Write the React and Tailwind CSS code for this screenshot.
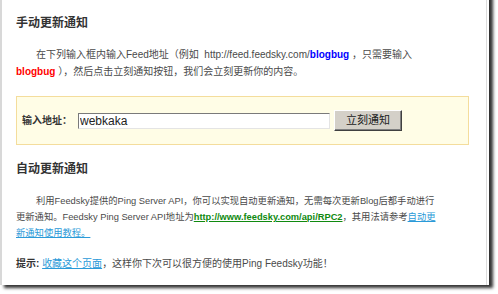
import React from 'react';

const FONT = { fontFamily: '"Liberation Sans", "Noto Sans CJK SC", sans-serif' };

export default function App() {
  return (
    <div className="w-[498px] h-[294px] bg-white overflow-hidden" style={FONT}>
      <div className="w-[489px] h-[295px] -mt-[10px] border-l-2 border-[#d8d8d8] bg-white shadow-[4px_3px_3px_rgba(0,0,0,0.8)]">
        <div className="h-full w-[485px] border-r border-[#dcdcdc] pt-[10px] pl-[14px] text-[#4a4a4a]">
          {/* Manual notify */}
          <h3 className="pt-[15px] text-[12px] font-bold leading-[16px] text-[#333]">手动更新通知</h3>

          <div className="mt-[15px] text-[10px] leading-[17px] whitespace-nowrap">
            <div className="pl-[20px]">
              在下列输入框内输入Feed地址（例如 &nbsp;http://feed.feedsky.com/<b className="text-[#0000ff]">blogbug</b> ，只需要输入
            </div>
            <div>
              <b className="text-[#ff0000]">blogbug</b> ），然后点击立刻通知按钮，我们会立刻更新你的内容。
            </div>
          </div>

          {/* Input box */}
          <div className="mt-[16px] w-[453px] h-[49px] border border-[#f4dd9c] bg-[#fffde6] flex items-center pl-[5px]">
            <span className="font-bold text-[#333] text-[10px]">输入地址：</span>
            <input
              type="text"
              defaultValue="webkaka"
              className="ml-[6px] w-[252px] h-[16px] bg-white border border-t-[#7a7a7a] border-l-[#7a7a7a] border-r-[#e4e4e4] border-b-[#e4e4e4] px-[1px] text-[12px] leading-[14px] text-[#222] outline-none"
              style={FONT}
            />
            <button className="ml-[4px] w-[68px] h-[21px] bg-[#d4d0c8] border border-t-white border-l-white border-r-[#404040] border-b-[#404040] shadow-[inset_-1px_-1px_0_#808080] text-[11px] text-[#222]">
              立刻通知
            </button>
          </div>

          {/* Auto notify */}
          <h3 className="mt-[16px] text-[12px] font-bold leading-[16px] text-[#333]">自动更新通知</h3>

          <div className="mt-[16px] text-[9.3px] leading-[16px] whitespace-nowrap">
            <div className="pl-[20px]">
              利用Feedsky提供的Ping Server API，你可以实现自动更新通知，无需每次更新Blog后都手动进行
            </div>
            <div>
              更新通知。Feedsky Ping Server API地址为
              <a href="#" className="font-bold text-[#108a10] underline">http://www.feedsky.com/api/RPC2</a>
              ，其用法请参考<a href="#" className="text-[#2a9ad8] underline">自动更</a>
            </div>
            <div>
              <a href="#" className="text-[#2a9ad8] underline">新通知使用教程。</a>
            </div>
          </div>

          <div className="mt-[15px] text-[10px] leading-[16px] whitespace-nowrap">
            <b className="text-[#333]">提示:</b> <a href="#" className="text-[#2a9ad8] underline">收藏这个页面</a>，这样你下次可以很方便的使用Ping Feedsky功能！
          </div>
        </div>
      </div>
    </div>
  );
}
